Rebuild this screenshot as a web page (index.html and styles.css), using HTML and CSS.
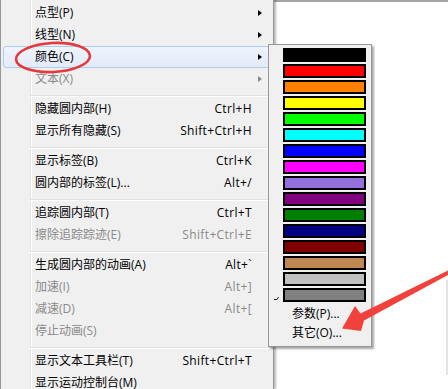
FILE: index.html
```html
<!DOCTYPE html>
<html lang="zh-CN">
<head>
<meta charset="utf-8">
<title>菜单</title>
<link rel="stylesheet" href="styles.css">
</head>
<body>
<div class="screen">
  <div class="menu">
    <div class="item"><span class="label">点型(P)</span><span class="sub"><i class="tri"></i></span></div>
    <div class="item"><span class="label">线型(N)</span><span class="sub"><i class="tri"></i></span></div>
    <div class="item hot"><span class="label">颜色(C)</span><span class="sub"><i class="tri"></i></span></div>
    <div class="item off"><span class="label">文本(X)</span><span class="sub"><i class="tri"></i></span></div>
    <div class="sep"></div>
    <div class="item"><span class="label">隐藏圆内部(H)</span><span class="key">Ctrl+H</span><span class="sub"></span></div>
    <div class="item"><span class="label">显示所有隐藏(S)</span><span class="key">Shift+Ctrl+H</span><span class="sub"></span></div>
    <div class="sep"></div>
    <div class="item"><span class="label">显示标签(B)</span><span class="key">Ctrl+K</span><span class="sub"></span></div>
    <div class="item"><span class="label">圆内部的标签(L)...</span><span class="key">Alt+/</span><span class="sub"></span></div>
    <div class="sep"></div>
    <div class="item"><span class="label">追踪圆内部(T)</span><span class="key">Ctrl+T</span><span class="sub"></span></div>
    <div class="item off"><span class="label">擦除追踪踪迹(E)</span><span class="key">Shift+Ctrl+E</span><span class="sub"></span></div>
    <div class="sep"></div>
    <div class="item"><span class="label">生成圆内部的动画(A)</span><span class="key">Alt+`</span><span class="sub"></span></div>
    <div class="item off"><span class="label">加速(I)</span><span class="key">Alt+]</span><span class="sub"></span></div>
    <div class="item off"><span class="label">减速(D)</span><span class="key">Alt+[</span><span class="sub"></span></div>
    <div class="item off"><span class="label">停止动画(S)</span><span class="sub"></span></div>
    <div class="sep"></div>
    <div class="item"><span class="label">显示文本工具栏(T)</span><span class="key">Shift+Ctrl+T</span><span class="sub"></span></div>
    <div class="item"><span class="label">显示运动控制台(M)</span><span class="sub"></span></div>
  </div>
  <div class="canvas"><div class="edge"></div></div>

  <div class="submenu">
    <div class="sw" style="background:#000000"></div>
    <div class="sw" style="background:#ff0000"></div>
    <div class="sw" style="background:#ff8000"></div>
    <div class="sw" style="background:#ffff00"></div>
    <div class="sw" style="background:#00ff00"></div>
    <div class="sw" style="background:#00ffff"></div>
    <div class="sw" style="background:#0000ff"></div>
    <div class="sw" style="background:#ff00ff"></div>
    <div class="sw" style="background:#9370db"></div>
    <div class="sw" style="background:#800080"></div>
    <div class="sw" style="background:#008000"></div>
    <div class="sw" style="background:#000080"></div>
    <div class="sw" style="background:#800000"></div>
    <div class="sw" style="background:#c08850"></div>
    <div class="sw" style="background:#c0c0c0"></div>
    <div class="sw" style="background:#808080"></div>
    <div class="sitem">参数(P)...</div>
    <div class="sitem">其它(O)...</div>
    <svg class="mark" width="5" height="4" viewBox="0 0 5 4"><path d="M0 3.5H3L4.5 1" fill="none" stroke="#222" stroke-width="1"/></svg>
  </div>

  <svg class="annot" width="448" height="389" viewBox="0 0 448 389">
    <ellipse cx="53" cy="57.5" rx="37" ry="14.5" transform="rotate(-3 53 57.5)" fill="none" stroke="#e53a3d" stroke-width="2.6"/>
    <polygon points="342,328.5 355,306 360.5,313.5 449,270 450,274 364,320.5 361,331" fill="#f0413c"/>
  </svg>
</div>
</body>
</html>
```

FILE: styles.css
```css
html, body {
  margin: 0;
  padding: 0;
  background: #fff;
}

.screen {
  position: relative;
  display: flex;
  width: 448px;
  height: 389px;
  overflow: hidden;
  background: #fff;
  font-family: "Open Sans", "Noto Sans CJK SC", sans-serif;
  font-size: 12px;
  color: #000;
}

.menu {
  flex: none;
  width: 274px;
  box-sizing: border-box;
  padding: 2px 0;
  border-left: 1px solid #979797;
  border-right: 1px solid #979797;
  background:
    linear-gradient(to right, transparent 29px, #e2e3e3 29px, #e2e3e3 30px, #ffffff 30px, #ffffff 31px, transparent 31px),
    #f0f0f0;
  box-shadow: 2px 0 2px rgba(0, 0, 0, 0.28);
  position: relative;
  z-index: 1;
}

.item {
  display: flex;
  align-items: center;
  height: 22px;
  box-sizing: border-box;
  margin: 0 3px 0 2px;
  padding-left: 31px;
  border: 1px solid transparent;
  border-radius: 3px;
  white-space: nowrap;
  line-height: 1;
}

.item.hot {
  border-color: #aecbf0;
  background: linear-gradient(#eef4fc, #e3ebf8);
}

.item.off {
  color: #8a8a8a;
}

.label {
  flex: 1;
}

.key {
  flex: none;
  letter-spacing: 0.35px;
}

.sub {
  flex: none;
  width: 17px;
  box-sizing: border-box;
  padding-left: 6px;
  display: flex;
  align-items: center;
}

.tri {
  display: block;
  width: 0;
  height: 0;
  border-left: 4px solid #000;
  border-top: 3.5px solid transparent;
  border-bottom: 3.5px solid transparent;
}

.item.off .tri {
  border-left-color: #8a8a8a;
}

.sep {
  height: 8px;
  box-sizing: border-box;
  padding-top: 5px;
  margin: 0 1px 0 29px;
}

.sep::before {
  content: "";
  display: block;
  border-top: 1px solid #e0e0e0;
  border-bottom: 1px solid #ffffff;
}

.canvas {
  flex: 1;
  position: relative;
  border-top: 2px solid #a4a4a4;
}

.edge {
  position: absolute;
  right: 0;
  top: 278px;
  width: 2px;
  height: 95px;
  background: #e4e4e4;
}

.submenu {
  position: absolute;
  left: 268px;
  top: 44px;
  width: 104px;
  height: 303px;
  box-sizing: border-box;
  padding-top: 3px;
  border: 1px solid #979797;
  background: #f0f0f0;
  box-shadow: 2px 2px 2px rgba(0, 0, 0, 0.35);
  z-index: 2;
}

.sw {
  width: 83px;
  height: 14px;
  box-sizing: border-box;
  margin: 0 0 2px 14px;
  border: 2px solid #000;
}

.sitem {
  display: flex;
  align-items: center;
  height: 19px;
  padding-left: 23px;
  white-space: nowrap;
  line-height: 1;
}

.mark {
  position: absolute;
  left: 5px;
  top: 251px;
}

.annot {
  position: absolute;
  left: 0;
  top: 0;
  z-index: 3;
  pointer-events: none;
}
```
